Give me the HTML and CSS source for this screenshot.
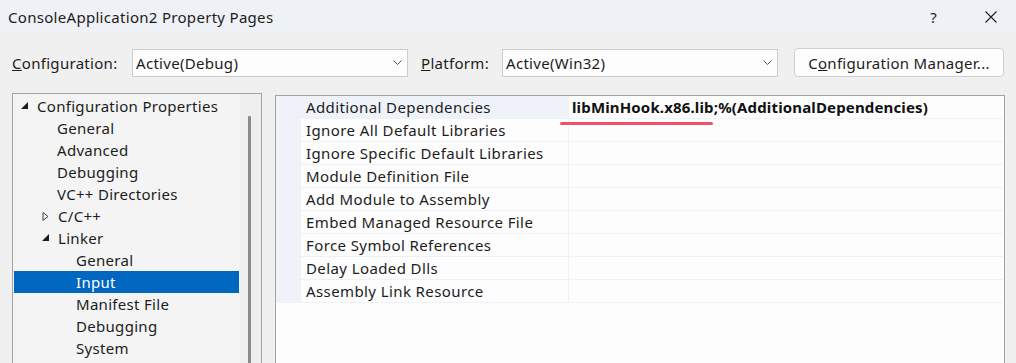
FILE: index.html
```html
<!DOCTYPE html>
<html lang="en">
<head>
    <meta charset="UTF-8">
    <meta name="viewport" content="width=device-width, initial-scale=1.0">
    <title>ConsoleApplication2 Property Pages</title>
    <link rel="stylesheet" href="styles.css">
</head>
<body>
    <div class="titlebar">
        <span class="title">ConsoleApplication2 Property Pages</span>
        <div class="title-buttons">
            <span class="help">?</span>
            <svg class="close" width="12" height="12" viewBox="0 0 12 12">
                <path d="M0.5 0.5 L11.5 11.5 M11.5 0.5 L0.5 11.5" stroke="#1c1c1c" stroke-width="1.1" fill="none"/>
            </svg>
        </div>
    </div>

    <div class="toolbar">
        <span class="field-label config-label"><u>C</u>onfiguration:</span>
        <div class="combo">
            <span>Active(Debug)</span>
            <svg class="chevron" width="9" height="5" viewBox="0 0 9 5">
                <path d="M0.5 0.5 L4.5 4.5 L8.5 0.5" stroke="#555" stroke-width="1" fill="none"/>
            </svg>
        </div>
        <span class="field-label platform-label"><u>P</u>latform:</span>
        <div class="combo">
            <span>Active(Win32)</span>
            <svg class="chevron" width="9" height="5" viewBox="0 0 9 5">
                <path d="M0.5 0.5 L4.5 4.5 L8.5 0.5" stroke="#555" stroke-width="1" fill="none"/>
            </svg>
        </div>
        <button class="manager-btn">C<u>o</u>nfiguration Manager...</button>
    </div>

    <div class="main">
        <div class="tree">
            <ul class="tree-list">
                <li class="node level-0">
                    <svg class="expander" width="8" height="8" viewBox="0 0 8 8"><polygon points="7,0 7,7 0,7" fill="#1c1c1c"/></svg>
                    Configuration Properties
                </li>
                <li class="node level-1">General</li>
                <li class="node level-1">Advanced</li>
                <li class="node level-1">Debugging</li>
                <li class="node level-1">VC++ Directories</li>
                <li class="node level-1">
                    <svg class="expander" width="8" height="9" viewBox="0 0 8 9"><polygon points="1,0.5 6,4.5 1,8.5" fill="none" stroke="#444" stroke-width="1"/></svg>
                    C/C++
                </li>
                <li class="node level-1">
                    <svg class="expander" width="8" height="8" viewBox="0 0 8 8"><polygon points="7,0 7,7 0,7" fill="#1c1c1c"/></svg>
                    Linker
                </li>
                <li class="node level-2">General</li>
                <li class="node level-2 selected">Input</li>
                <li class="node level-2">Manifest File</li>
                <li class="node level-2">Debugging</li>
                <li class="node level-2">System</li>
            </ul>
            <div class="scrollbar">
                <div class="thumb"></div>
            </div>
        </div>

        <div class="grid">
            <div class="row current">
                <div class="gutter"></div>
                <div class="name">Additional Dependencies</div>
                <div class="value">libMinHook.x86.lib;%(AdditionalDependencies)</div>
            </div>
            <div class="row">
                <div class="gutter"></div>
                <div class="name">Ignore All Default Libraries</div>
                <div class="value"></div>
            </div>
            <div class="row">
                <div class="gutter"></div>
                <div class="name">Ignore Specific Default Libraries</div>
                <div class="value"></div>
            </div>
            <div class="row">
                <div class="gutter"></div>
                <div class="name">Module Definition File</div>
                <div class="value"></div>
            </div>
            <div class="row">
                <div class="gutter"></div>
                <div class="name">Add Module to Assembly</div>
                <div class="value"></div>
            </div>
            <div class="row">
                <div class="gutter"></div>
                <div class="name">Embed Managed Resource File</div>
                <div class="value"></div>
            </div>
            <div class="row">
                <div class="gutter"></div>
                <div class="name">Force Symbol References</div>
                <div class="value"></div>
            </div>
            <div class="row">
                <div class="gutter"></div>
                <div class="name">Delay Loaded Dlls</div>
                <div class="value"></div>
            </div>
            <div class="row">
                <div class="gutter"></div>
                <div class="name">Assembly Link Resource</div>
                <div class="value"></div>
            </div>
            <div class="mark"></div>
        </div>
    </div>
</body>
</html>
```

FILE: styles.css
```css
body {
    margin: 0;
    background-color: #f0f0f0;
    color: #1c1c1c;
    font-family: "Noto Sans", "Open Sans", Arial, sans-serif;
    font-size: 15px;
    letter-spacing: 0.3px;
    height: 363px;
    overflow: hidden;
}
.titlebar {
    height: 33px;
    background-color: #eef1f6;
    display: flex;
    align-items: center;
    justify-content: space-between;
    padding: 0 19px 0 8px;
}
.title {
    line-height: 20px;
}
.title-buttons {
    display: flex;
    align-items: center;
    gap: 48px;
}
.close {
    display: block;
}
.toolbar {
    display: flex;
    align-items: center;
    height: 29px;
    padding: 15px 12px 16px;
}
.field-label {
    flex: none;
}
.config-label {
    width: 120px;
}
.platform-label {
    width: 81px;
    margin-left: 13px;
}
.combo {
    flex: none;
    box-sizing: border-box;
    width: 276px;
    height: 28px;
    background-color: #fdfdfd;
    border: 1px solid #cccccc;
    display: flex;
    align-items: center;
    justify-content: space-between;
    padding: 0 5px 0 3px;
}
.chevron {
    display: block;
}
.manager-btn {
    flex: none;
    box-sizing: border-box;
    width: 210px;
    height: 29px;
    margin-left: 16px;
    background-color: #fdfdfd;
    border: 1px solid #cfcfcf;
    border-radius: 4px;
    font-family: inherit;
    font-size: 15px;
    letter-spacing: 0.3px;
    color: #1c1c1c;
    padding: 0;
}
.main {
    display: flex;
    align-items: flex-start;
    gap: 13px;
    padding-left: 12px;
}
.tree {
    box-sizing: border-box;
    width: 250px;
    height: 270px;
    border: 1px solid #a3a3a3;
    border-bottom: none;
    display: flex;
    background-color: #f4f4f4;
}
.tree-list {
    list-style: none;
    margin: 0;
    padding: 1px 0 0;
    flex: 1;
}
.node {
    height: 22px;
    line-height: 22px;
    margin: 0 1px;
    display: flex;
    align-items: center;
    white-space: nowrap;
}
.node .expander {
    flex: none;
    margin-right: 8px;
}
.level-0 {
    padding-left: 7px;
}
.level-1 {
    padding-left: 43px;
}
.level-1 .expander {
    margin-left: -15px;
}
.level-2 {
    padding-left: 62px;
}
.selected {
    background-color: #0067c0;
    color: white;
}
.scrollbar {
    width: 21px;
    background-color: #efefef;
    padding-top: 22px;
    box-sizing: border-box;
}
.thumb {
    width: 3px;
    height: 260px;
    margin-left: 8px;
    background-color: #8a8a8a;
    border-radius: 1px;
}
.grid {
    position: relative;
    box-sizing: border-box;
    width: 730px;
    height: 268px;
    margin-top: 2px;
    border: 1px solid #a3a3a3;
    border-bottom: none;
    background-color: #fdfdfd;
}
.row {
    display: flex;
    height: 23px;
}
.gutter {
    width: 25px;
    flex: none;
    background-color: #eff3f9;
}
.name {
    box-sizing: border-box;
    width: 267px;
    flex: none;
    padding-left: 5px;
    line-height: 22px;
    border-bottom: 1px solid #eef1f6;
    white-space: nowrap;
    letter-spacing: 0.4px;
}
.value {
    flex: 1;
    padding-left: 3px;
    line-height: 22px;
    border-left: 1px solid #eef1f6;
    border-bottom: 1px solid #eef1f6;
    font-weight: bold;
    letter-spacing: 0.15px;
    color: #111;
    white-space: nowrap;
}
.current .name {
    background-color: #eff3f9;
}
.mark {
    position: absolute;
    left: 284px;
    top: 26px;
    width: 153px;
    height: 3px;
    border-radius: 2px;
    background-color: #f0506a;
}
```
